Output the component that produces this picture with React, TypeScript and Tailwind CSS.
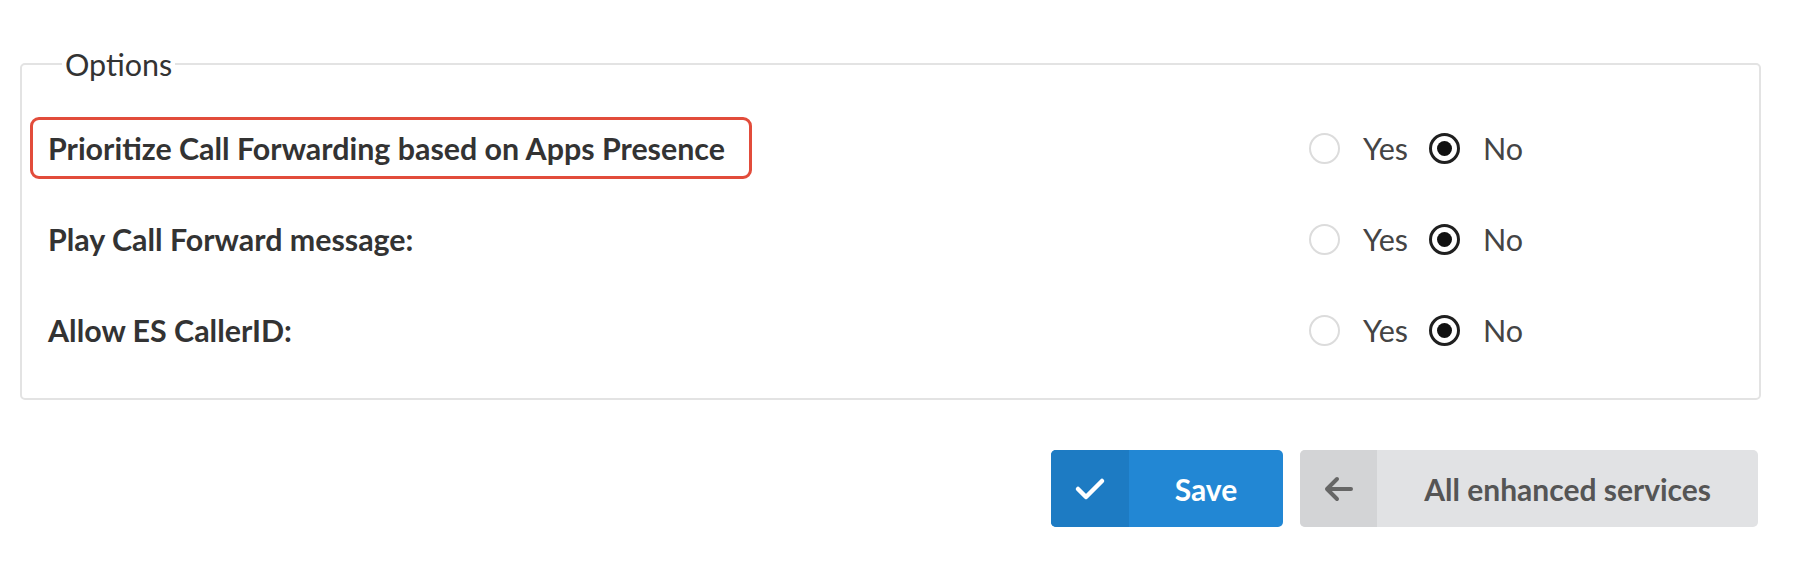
import { useState } from 'react';

type YesNo = 'yes' | 'no';

interface OptionRow {
    id: string;
    label: string;
    highlighted?: boolean;
}

const rows: OptionRow[] = [
    { id: 'prioritize', label: 'Prioritize Call Forwarding based on Apps Presence', highlighted: true },
    { id: 'playMessage', label: 'Play Call Forward message:' },
    { id: 'esCallerId', label: 'Allow ES CallerID:' },
];

const Radio = ({ checked, onClick, label }: { checked: boolean; onClick: () => void; label: string }) => (
    <button type="button" onClick={onClick} className="flex items-center gap-[23px]">
        <span
            className={
                checked
                    ? 'flex h-[31px] w-[31px] items-center justify-center rounded-full border-[3px] border-[#1f1f1f] bg-white'
                    : 'flex h-[31px] w-[31px] items-center justify-center rounded-full border-2 border-[#dcdcdc] bg-white'
            }
        >
            {checked && <span className="h-[15px] w-[15px] rounded-full bg-[#111]" />}
        </span>
        <span className="text-[30.5px] text-[#444]">{label}</span>
    </button>
);

export default function App() {
    const [values, setValues] = useState<Record<string, YesNo>>({
        prioritize: 'no',
        playMessage: 'no',
        esCallerId: 'no',
    });

    const setValue = (id: string, v: YesNo) => setValues((prev) => ({ ...prev, [id]: v }));

    return (
        <div className="min-h-screen bg-white pl-[20px] pr-[37px] pt-[46px] font-['Lato',sans-serif] leading-none">
            <fieldset className="rounded-[5px] border-2 border-[#e3e3e3] pb-[37px] pl-[8px] pt-[35px]">
                <legend className="ml-[32px] px-[3px] text-[30.5px] leading-[36px] text-[#333]">Options</legend>

                <div className="flex flex-col gap-[29px]">
                    {rows.map((row) => (
                        <div key={row.id} className="flex h-[62px] items-center">
                            <div className="w-[1279px] shrink-0">
                                <div
                                    className={
                                        row.highlighted
                                            ? 'inline-flex h-[62px] items-center rounded-[9px] border-[3px] border-[#e24c3b] pl-[15px] pr-[24px]'
                                            : 'inline-flex h-[62px] items-center rounded-[9px] border-[3px] border-transparent pl-[15px] pr-[24px]'
                                    }
                                >
                                    <span className="text-[30.4px] font-bold text-[#333]">{row.label}</span>
                                </div>
                            </div>
                            <div className="flex items-center gap-[21px]">
                                <Radio label="Yes" checked={values[row.id] === 'yes'} onClick={() => setValue(row.id, 'yes')} />
                                <Radio label="No" checked={values[row.id] === 'no'} onClick={() => setValue(row.id, 'no')} />
                            </div>
                        </div>
                    ))}
                </div>
            </fieldset>

            <div className="mt-[50px] flex justify-end gap-[17px] pr-[3px]">
                <button type="button" className="flex h-[77px] overflow-hidden rounded-[5px] bg-[#2287d4] text-white">
                    <span className="flex w-[78px] items-center justify-center bg-[#1d7bc3]">
                        <svg width="32" height="24" viewBox="0 0 32 24" fill="none" stroke="white" strokeWidth="4.5" strokeLinecap="round" strokeLinejoin="round">
                            <path d="M4 12 L12 20 L28 4" />
                        </svg>
                    </span>
                    <span className="flex items-center px-[46px] text-[30px] font-bold">Save</span>
                </button>
                <button type="button" className="flex h-[77px] overflow-hidden rounded-[5px] bg-[#e1e2e4] text-[#555]">
                    <span className="flex w-[77px] items-center justify-center bg-[#d3d4d6]">
                        <svg width="30" height="26" viewBox="0 0 30 26" fill="none" stroke="#666" strokeWidth="4" strokeLinecap="round" strokeLinejoin="round">
                            <path d="M27 13 H4 M13 3 L3 13 L13 23" />
                        </svg>
                    </span>
                    <span className="flex items-center px-[47px] text-[30px] font-bold">All enhanced services</span>
                </button>
            </div>
        </div>
    );
}
